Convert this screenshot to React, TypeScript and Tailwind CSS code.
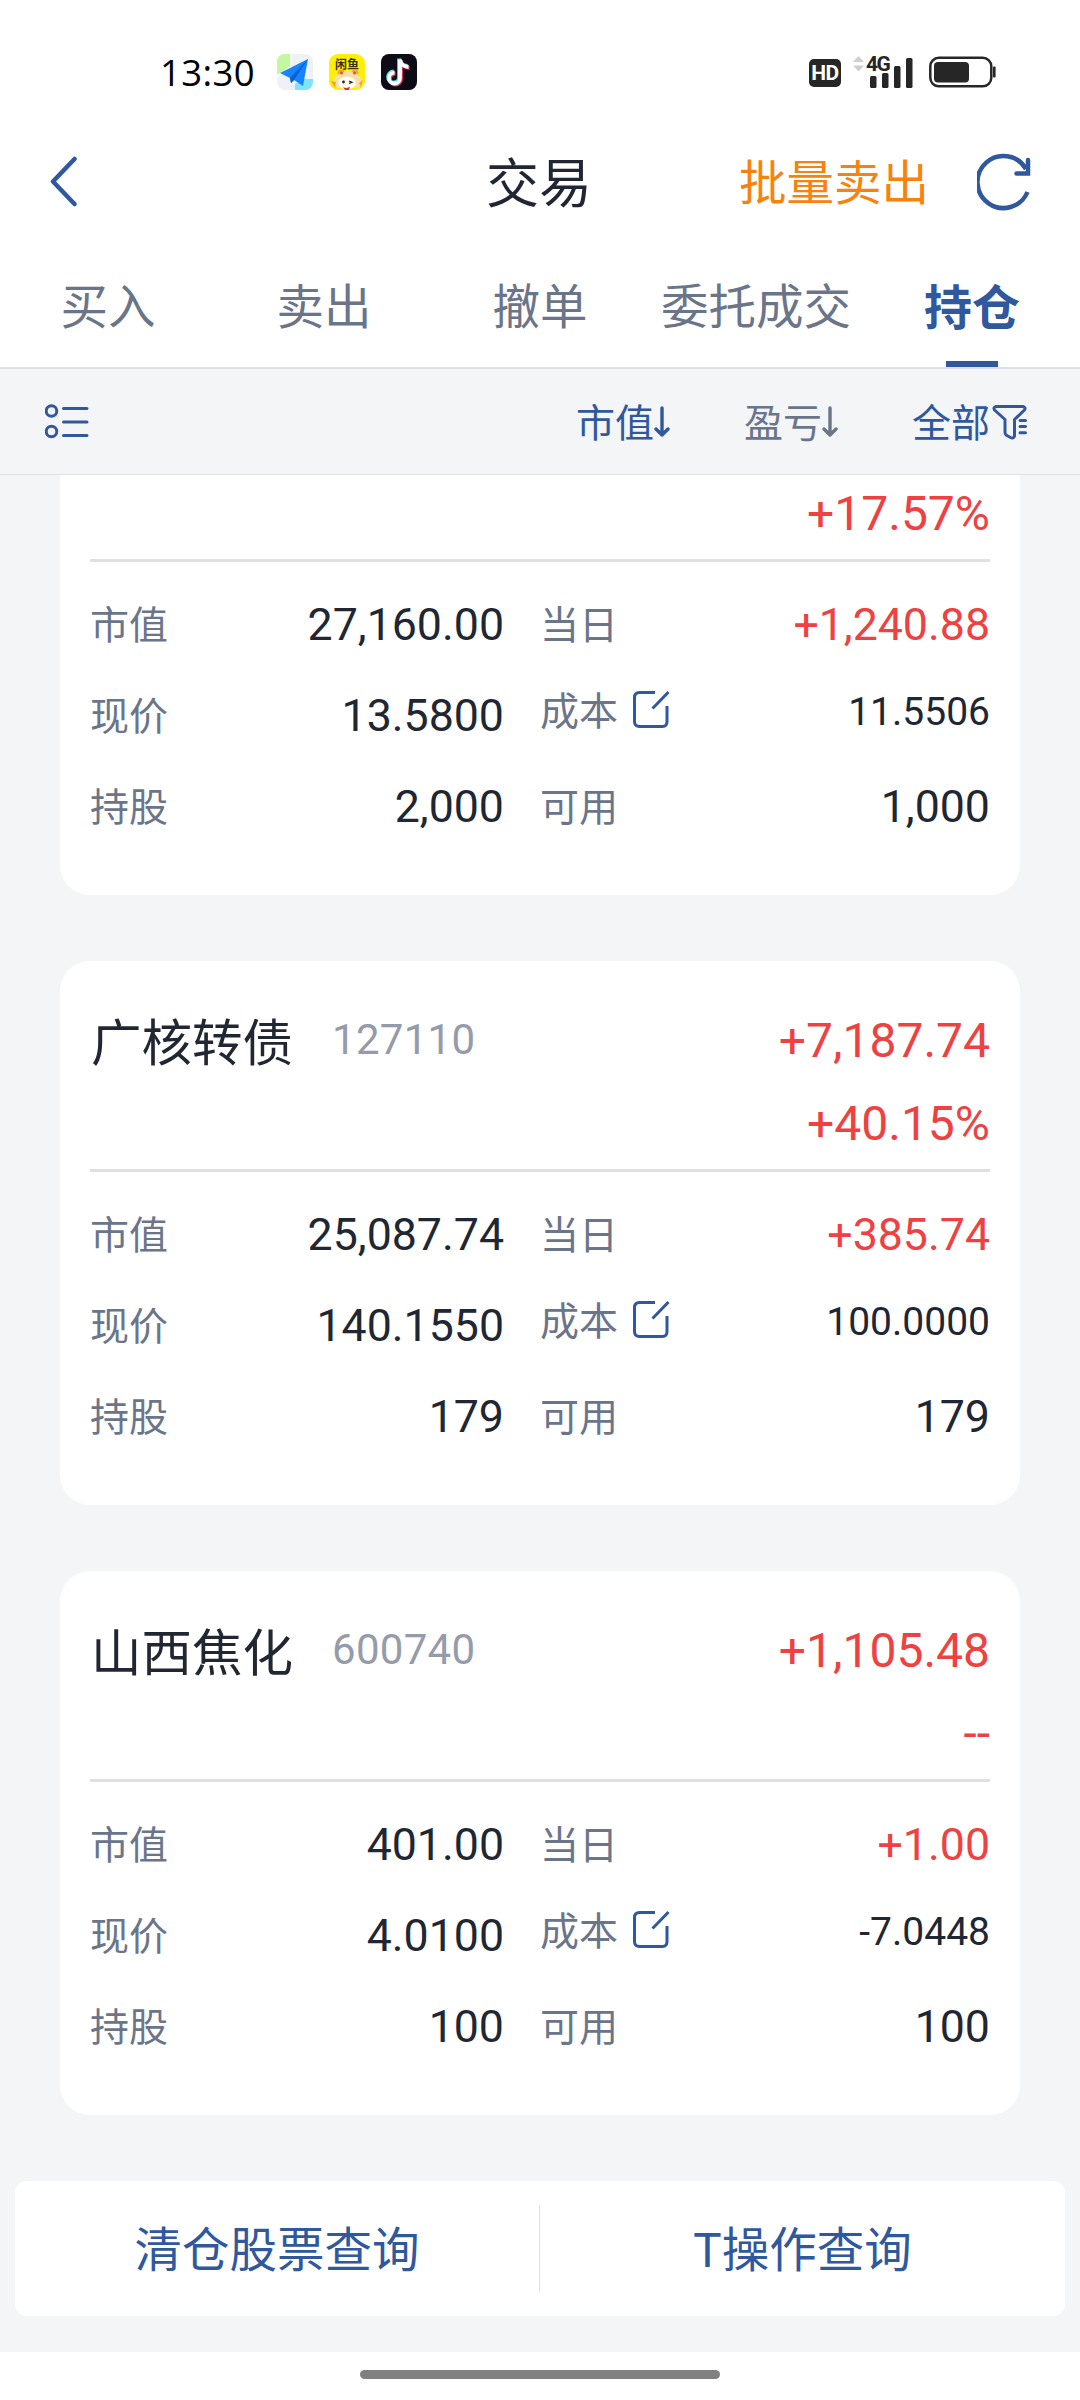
import { useState } from "react"

type Holding = {
    name?: string
    code?: string
    profit?: string
    percent: string
    marketValue: string
    today: string
    price: string
    cost: string
    shares: string
    available: string
}

const tabs = ["买入", "卖出", "撤单", "委托成交", "持仓"]

const holdings: Holding[] = [
    // 列表已滚动，第一张卡片只露出收益率以下的部分
    {
        percent: "+17.57%",
        marketValue: "27,160.00",
        today: "+1,240.88",
        price: "13.5800",
        cost: "11.5506",
        shares: "2,000",
        available: "1,000",
    },
    {
        name: "广核转债",
        code: "127110",
        profit: "+7,187.74",
        percent: "+40.15%",
        marketValue: "25,087.74",
        today: "+385.74",
        price: "140.1550",
        cost: "100.0000",
        shares: "179",
        available: "179",
    },
    {
        name: "山西焦化",
        code: "600740",
        profit: "+1,105.48",
        percent: "--",
        marketValue: "401.00",
        today: "+1.00",
        price: "4.0100",
        cost: "-7.0448",
        shares: "100",
        available: "100",
    },
]

function MapAppIcon() {
    return (
        <svg width="36" height="36" viewBox="0 0 36 36">
            <defs>
                <clipPath id="mapClip"><rect width="36" height="36" rx="8" /></clipPath>
            </defs>
            <g clipPath="url(#mapClip)">
                <rect width="36" height="36" fill="#eef2f6" />
                <path d="M0 0h14v13L0 21z" fill="#c3f8a0" />
                <path d="M14 0v14M0 22l14-9" stroke="#fff" strokeWidth="1.5" />
                <path d="M27 25h9v11H18v-6z" fill="#7fe3fb" />
                <path d="M3 19L31 5l-5 27-9-6-3 3-1-5z" fill="#1684fc" />
                <path d="M31 5L13 24l1 5 3-3z" fill="#0b5fd8" />
            </g>
        </svg>
    )
}

function FishAppIcon() {
    return (
        <div className="relative w-9 h-9 rounded-[9px] bg-[#ffee0a] overflow-hidden">
            <p className="pt-1 text-center text-[12px] leading-[14px] font-bold text-[#3a3200]">闲鱼</p>
            <svg className="absolute inset-0" width="36" height="36" viewBox="0 0 36 36">
                <circle cx="12" cy="19" r="3.5" fill="#f3a53b" />
                <circle cx="26" cy="19" r="3.5" fill="#f3a53b" />
                <path d="M7 22q12-9 24 0l2 9-5 3H8l-5-5z" fill="#f6dfae" />
                <circle cx="12.5" cy="19" r="1.5" fill="#e4572a" />
                <circle cx="25.5" cy="19" r="1.5" fill="#e4572a" />
                <ellipse cx="18" cy="29" rx="9" ry="6.5" fill="#fffdf4" />
                <circle cx="14.5" cy="28" r="1.4" fill="#2b2111" />
                <path d="M20 27l3 1.2-3 1.2" fill="none" stroke="#2b2111" strokeWidth="1.2" />
                <path d="M14 33q4 2 7-.5l-1 3.5h-4z" fill="#e2321f" />
                <path d="M2 27l5 1-1 6zM34 26l-4 3 2 4z" fill="#f5a623" />
            </svg>
        </div>
    )
}

function MusicAppIcon() {
    const note = "M19 5.500v18.500a5.500 5.500 0 1 1-5.500-5.500M19 5.500q1 7 8.500 7.500"
    return (
        <svg width="36" height="36" viewBox="0 0 36 36" fill="none" strokeWidth="3.800">
            <rect width="36" height="36" rx="8" fill="#0c0b16" />
            <path d={note} stroke="#3fdfe0" transform="translate(-1 -1)" />
            <path d={note} stroke="#f0385c" transform="translate(1 1)" />
            <path d={note} stroke="#fff" />
        </svg>
    )
}

function StatusBar() {
    return (
        <div className="h-[130px] pt-[14px] pl-[160px] pr-[84px] flex items-center justify-between">
            <div className="flex items-center">
                <span className="w-[117px] pt-px font-['Open_Sans'] text-[36.5px] leading-none font-medium tracking-[0.4px] text-black">13:30</span>
                <div className="flex gap-4">
                    <MapAppIcon />
                    <FishAppIcon />
                    <MusicAppIcon />
                </div>
            </div>
            <div className="flex items-center">
                <span className="w-8 h-7 mt-[2px] rounded-[5px] bg-[#262626] text-center text-[21px] leading-7 font-bold text-white tracking-[-0.5px]">HD</span>
                <div className="relative w-[60px] h-8 ml-3">
                    <svg width="60" height="32" viewBox="0 0 60 32">
                        <path d="M0 6l5.500-6L11 6zM0 9.500h11L5.500 15.500z" fill="#cfcfcf" />
                        <g fill="#262626">
                            <rect x="17" y="20" width="6.500" height="12" rx="1.500" />
                            <rect x="29" y="17" width="6.500" height="15" rx="1.500" />
                            <rect x="41" y="10" width="6.500" height="22" rx="1.500" />
                            <rect x="53" y="2" width="6.500" height="30" rx="1.500" />
                        </g>
                    </svg>
                    <span className="absolute left-[13px] top-[-2px] text-[21px] leading-5 font-bold text-[#262626] tracking-[-1.5px]">4G</span>
                </div>
                <svg className="ml-4" width="67" height="32" viewBox="0 0 67 32">
                    <rect x="1.300" y="1.800" width="61" height="28.500" rx="8.500" fill="none" stroke="#262626" strokeWidth="2.500" />
                    <rect x="5" y="6" width="35" height="20.500" rx="4" fill="#262626" />
                    <rect x="64" y="10.500" width="2.600" height="11" rx="1" fill="#262626" />
                </svg>
            </div>
        </div>
    )
}

function Header() {
    return (
        <div className="h-[104px] grid grid-cols-[1fr_auto_1fr] items-center pl-[49px] pr-[51px]">
            <button>
                <svg width="28" height="54" viewBox="0 0 28 54" fill="none" stroke="#30589d" strokeWidth="4.500" strokeLinecap="round" strokeLinejoin="round">
                    <path d="M25.500 4L4 26.500 25.500 49" />
                </svg>
            </button>
            <h1 className="pt-[7px] text-[53px] leading-none text-[#202632]">交易</h1>
            <div className="-mr-[4px] flex justify-end items-center">
                <button className="pt-[5px] text-[47.5px] leading-none text-[#f7830c]">批量卖出</button>
                <svg className="ml-[48px]" width="56" height="58" viewBox="0 0 56 58" fill="none" stroke="#30589d" strokeWidth="4.500">
                    <path d="M50.500 39A26 26 0 1 1 49 16" />
                    <path d="M51 7V20.500H39.500" strokeLinecap="round" />
                </svg>
            </div>
        </div>
    )
}

function SortArrow() {
    return (
        <svg width="16" height="32" viewBox="0 0 16 32" fill="none" stroke="currentColor" strokeWidth="3.400" strokeLinecap="round" strokeLinejoin="round">
            <path d="M8 2v27M2 23l6 6 6-6" />
        </svg>
    )
}

function FilterBar() {
    return (
        <div className="h-[106px] pt-px border-b border-[#dee0e3] bg-[#f3f5f7] pl-[45px] pr-[51px] flex items-center justify-between text-[39px] leading-none text-[#30589d]">
            <svg width="44" height="36" viewBox="0 0 44 36" fill="none" stroke="#30589d" strokeWidth="3">
                <circle cx="6.500" cy="7" r="5.300" />
                <circle cx="6.500" cy="27.500" r="5.300" />
                <path d="M18.500 4.500h23.500M18.500 18h23.500M18.500 31.500h23.500" strokeLinecap="round" />
            </svg>
            <div className="flex items-center">
                <button className="flex items-center">
                    <span className="pt-1">市值</span>
                    <SortArrow />
                </button>
                <button className="ml-[74px] flex items-center text-[#6b758a]">
                    <span className="pt-1">盈亏</span>
                    <SortArrow />
                </button>
                <button className="ml-[74px] flex items-center">
                    <span className="pt-1">全部</span>
                    <svg className="ml-[2px] mr-px" width="36" height="36" viewBox="0 0 36 36" fill="none" stroke="#30589d" strokeWidth="3" strokeLinecap="round" strokeLinejoin="round">
                        <path d="M4 2.500H31q3 1 1.500 3.500L22.500 15.500V32q-1 3-4 1.500L14 31q-1-1-1-3V15.500L2.500 6Q1 3.500 4 2.500z" />
                        <path d="M28 16.500h5.500M28 22.500h5.500M28 28.800h5.500" />
                    </svg>
                </button>
            </div>
        </div>
    )
}

function EditIcon() {
    return (
        <svg className="ml-[14px] mb-[5px]" width="38" height="38" viewBox="0 0 38 38" fill="none" stroke="#30589d" strokeWidth="3">
            <path d="M23 2.500H7.500q-5 0-5 5v24q0 5 5 5h23q4.500 0 4.500-5V16" />
            <path d="M20.500 18.500L36.500 2" />
        </svg>
    )
}

function HoldingCard({ item }: { item: Holding }) {
    const labelClassName = "pt-[3px] text-[39px] leading-none text-[#6b758a]"
    const valueClassName = "pt-[2px] text-[44.7px] leading-none text-[#202632]"
    const cellClassName = "h-[91px] flex items-center justify-between"

    return (
        <div className={item.name ? "h-[544px] rounded-[30px] bg-white px-[30px]" : "h-[420px] rounded-b-[30px] bg-white px-[30px]"}>
            <div className={item.name ? "h-[208px] pb-1 flex justify-between items-end" : "h-[84px] pb-1 flex justify-end items-end"}>
                {item.name && (
                    <div className="h-[166px] flex items-start">
                        <span className="pl-px pt-[20px] text-[50.5px] leading-none text-[#202632]">{item.name}</span>
                        <span className="ml-[39px] pt-[20px] text-[42px] leading-none tracking-[0.3px] text-[#959bab]">{item.code}</span>
                    </div>
                )}
                <div className="flex flex-col items-end text-[48px] leading-[83px] text-[#ef4141]">
                    {item.profit && <span>{item.profit}</span>}
                    <span>{item.percent}</span>
                </div>
            </div>
            <div className="h-[3px] bg-[#dfe0e5]"></div>
            <div className="pt-[17px] grid grid-cols-[414px_450px] gap-x-[36px]">
                <div className={cellClassName}>
                    <span className={labelClassName}>市值</span>
                    <span className={valueClassName}>{item.marketValue}</span>
                </div>
                <div className={cellClassName}>
                    <span className={labelClassName}>当日</span>
                    <span className="pt-[2px] text-[44.7px] leading-none text-[#ef4141]">{item.today}</span>
                </div>
                <div className={cellClassName}>
                    <span className={labelClassName}>现价</span>
                    <span className={valueClassName}>{item.price}</span>
                </div>
                <div className="h-[91px] pb-[9px] flex items-center">
                    <span className={labelClassName}>成本</span>
                    <EditIcon />
                    <span className="ml-auto pt-[3px] text-[39px] leading-none text-[#202632]">{item.cost}</span>
                </div>
                <div className={cellClassName}>
                    <span className={labelClassName}>持股</span>
                    <span className={valueClassName}>{item.shares}</span>
                </div>
                <div className={cellClassName}>
                    <span className={labelClassName}>可用</span>
                    <span className={valueClassName}>{item.available}</span>
                </div>
            </div>
        </div>
    )
}

export default function App() {
    const [activeTab, setActiveTab] = useState("持仓")

    return (
        <div className="w-[1080px] h-[2400px] flex flex-col overflow-hidden bg-white font-[Roboto,'Noto_Sans_CJK_SC',sans-serif]">
            <StatusBar />
            <Header />
            <div className="h-[135px] grid grid-cols-5 border-b-2 border-[#dfe0e5]">
                {tabs.map(tab => (
                    <button key={tab}
                            className={tab === activeTab
                                ? "flex flex-col items-center text-[48px] leading-none font-bold text-[#30589d]"
                                : "flex flex-col items-center text-[47.5px] leading-none text-[#6b758a]"}
                            onClick={() => setActiveTab(tab)}>
                        <span className="pt-[51px]">{tab}</span>
                        {tab === activeTab && <span className="mt-auto w-[52px] h-[6px] bg-[#30589d]"></span>}
                    </button>
                ))}
            </div>
            <FilterBar />
            <div className="h-[1877px] bg-[#f3f5f7]">
                <div className="px-[60px] flex flex-col gap-[66px]">
                    {holdings.map((item, index) => <HoldingCard key={index} item={item} />)}
                </div>
                <div className="mt-[66px] mx-[15px] h-[135px] rounded-xl bg-white flex items-center text-[47.5px] leading-none text-[#30589d]">
                    <button className="w-[524px] pt-[7px]">清仓股票查询</button>
                    <span className="w-px h-[87px] bg-[#dfe0e5]"></span>
                    <button className="flex-1 pt-[7px]">T操作查询</button>
                </div>
            </div>
            <div className="flex-1 pt-[18px]">
                <div className="mx-auto w-[360px] h-[9px] rounded-full bg-[#808080]"></div>
            </div>
        </div>
    )
}
